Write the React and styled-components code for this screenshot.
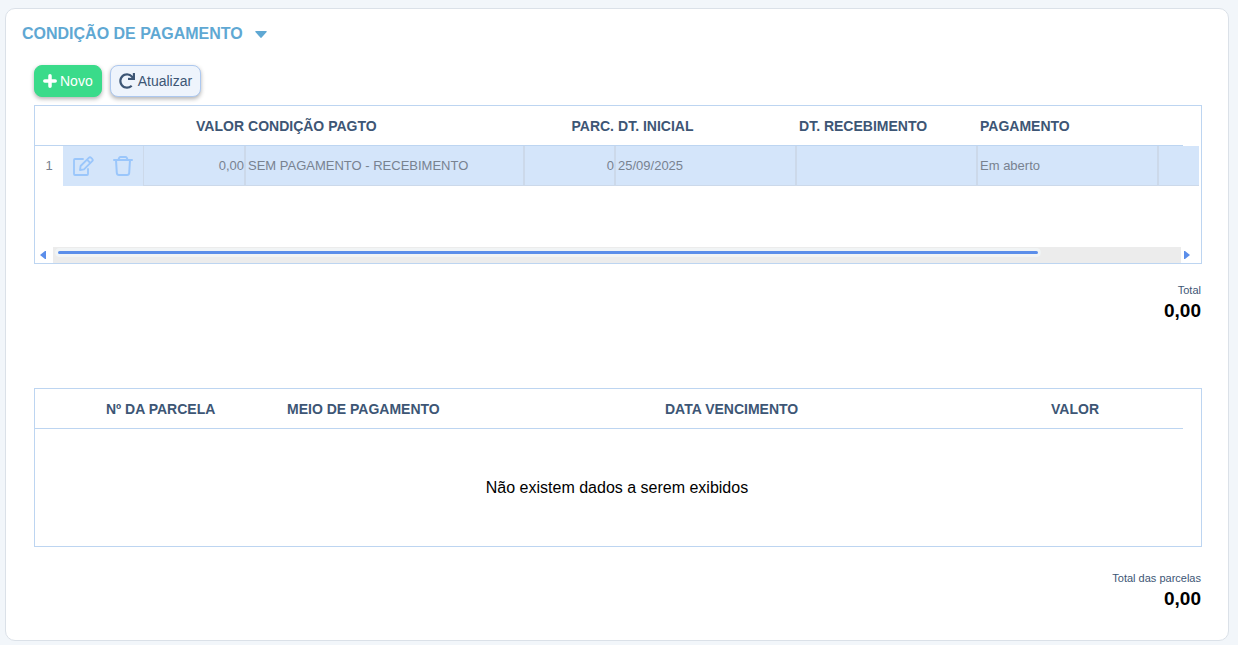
import React from "react";
import styled, { createGlobalStyle } from "styled-components";
import { FaRedo } from "react-icons/fa";

const Global = createGlobalStyle`
  * { box-sizing: border-box; }
  body {
    margin: 0;
    background: #f2f6fa;
    font-family: "Liberation Sans", Arial, sans-serif;
    color: #000;
  }
`;

const Page = styled.main`
  padding: 8px 9px 4px 5px;
`;

const Card = styled.section`
  background: #fff;
  border: 1px solid #dbe1e8;
  border-radius: 10px;
  padding: 15px 26px 28px 28px;
`;

const Title = styled.h2`
  margin: 0 0 0 -12px;
  font-size: 16px;
  line-height: 20px;
  font-weight: bold;
`;

const TitleToggle = styled.button`
  display: flex;
  align-items: center;
  gap: 12px;
  padding: 0;
  border: 0;
  background: none;
  font: inherit;
  color: #5fa8d3;
  cursor: pointer;
`;

const Toolbar = styled.div`
  display: flex;
  gap: 8px;
  margin: 21px 0 8px;
`;

const Button = styled.button`
  display: flex;
  align-items: center;
  gap: 3px;
  height: 32px;
  padding: 0 8px;
  border: 1px solid ${(p) => (p.$primary ? "#3adb8a" : "#adc8ef")};
  border-radius: 8px;
  background: ${(p) => (p.$primary ? "#3adb8a" : "#eef4fc")};
  color: ${(p) => (p.$primary ? "#fff" : "#3d5675")};
  font-family: inherit;
  font-size: 14px;
  box-shadow: 0 2px 4px rgba(0, 0, 0, 0.3);
  cursor: pointer;
`;

const Frame = styled.div`
  display: flex;
  flex-direction: column;
  min-height: 159px;
  border: 1px solid #bdd5f1;
  overflow: hidden;
`;

const Table = styled.table`
  width: calc(100% - 2px);
  table-layout: fixed;
  border-collapse: separate;
  border-spacing: 0;
`;

const Col = styled.col`
  width: ${(p) => (p.$w ? p.$w + "px" : "auto")};
`;

const HeadCell = styled.th`
  height: 40px;
  padding: 0 1px 0 3px;
  border-bottom: 1px solid #bdd5f1;
  font-size: 14px;
  font-weight: bold;
  color: #3d5675;
  white-space: nowrap;
  text-align: ${(p) => p.$align || "left"};
`;

const Gutter = styled.td`
  height: 40px;
  padding: 0;
`;

const Cell = styled.td`
  height: 40px;
  padding: 0 0 0 2px;
  border: solid #ccd9ea;
  border-width: 0 1px 1px;
  background: #d4e5fa;
  font-size: 13px;
  color: #788290;
  white-space: nowrap;
  text-align: ${(p) => p.$align || "left"};
`;

const EndCell = styled(Cell)`
  border-right: 0;
`;

const RowNumber = styled.th`
  padding: 0 0 1px;
  font-size: 13px;
  font-weight: normal;
  color: #788290;
`;

const ActionCell = styled.td`
  padding: 0;
  background: #d4e5fa;
`;

const IconButton = styled.button`
  display: flex;
  align-items: center;
  justify-content: center;
  width: 40px;
  height: 40px;
  padding: 0;
  border: 0;
  background: none;
  color: #9ac6fb;
  cursor: pointer;
`;

const EmptyCell = styled.td`
  height: 117px;
  padding: 0;
  font-size: 16px;
  text-align: center;
`;

const ScrollBar = styled.div`
  display: flex;
  height: 16px;
  margin-top: auto;
  padding-right: 2px;
`;

const ScrollArrow = styled.button`
  display: flex;
  align-items: center;
  width: 18px;
  padding: 0 0 0 ${(p) => (p.$next ? 3 : 5)}px;
  border: 0;
  background: none;
  color: #5b8eea;
`;

const Track = styled.div`
  flex: 1;
  padding: 1px 6px 1px 2px;
  background: #ececec;
`;

const Thumb = styled.div`
  width: 88%;
  height: 9px;
  border: 3px solid #f1f4f5;
  border-radius: 5px;
  background: #5b8eea;
`;

const Total = styled.div`
  display: flex;
  flex-direction: column;
  align-items: flex-end;
  margin: ${(p) => p.$top}px 1px 0;
`;

const TotalLabel = styled.span`
  font-size: 11px;
  line-height: 16px;
  color: #3d5675;
`;

const TotalValue = styled.strong`
  font-size: 19px;
  line-height: 26px;
`;

const Spacer = styled.div`
  height: 64px;
`;

const CaretIcon = () => (
  <svg width="12" height="7" viewBox="0 0 12 7" fill="currentColor" aria-hidden="true">
    <path d="M.8 0h10.400q.8.200.4.900L6.700 6.600q-.7.600-1.400 0L.4.900Q0 .2.800 0z" />
  </svg>
);

const PlusIcon = () => (
  <svg width="14" height="14" viewBox="0 0 14 14" stroke="currentColor" strokeWidth="3.500" strokeLinecap="round" aria-hidden="true">
    <path d="M7 1.800v10.400M1.800 7h10.400" />
  </svg>
);

const EditIcon = () => (
  <svg width="22" height="22" viewBox="0 0 22 22" fill="none" stroke="currentColor" strokeWidth="1.800" strokeLinejoin="round" strokeLinecap="round" aria-hidden="true">
    <path d="M11 4H3Q2 4 2 5v14q0 1 1 1h12q1 0 1-1v-5" />
    <path d="M8 15l.6-4 8.200-8.200a1.700 1.700 0 0 1 2.400 0l1 1a1.700 1.700 0 0 1 0 2.400L12 14.400 8 15zM15 4.700l3.300 3.300" />
  </svg>
);

const TrashIcon = () => (
  <svg width="22" height="22" viewBox="0 0 22 22" fill="none" stroke="currentColor" strokeWidth="2" strokeLinejoin="round" strokeLinecap="round" aria-hidden="true">
    <path d="M2 5h18M6.500 5Q7 2 8.500 2h5q1.500 0 2 3M4 5l.8 13q.2 2 2.200 2h8q2 0 2.200-2L18 5" />
  </svg>
);

const ArrowIcon = ({ next }) => (
  <svg width="6" height="8" viewBox="0 0 6 8" fill="currentColor" aria-hidden="true">
    <path d={next ? "M0 0h1l5 4-5 4H0z" : "M6 0H5L0 4l5 4h1z"} />
  </svg>
);

const paymentCols = [28, 40, 40, 102, 279, 91, 181, 181, 181, null, 16];
const parcelCols = [68, 181, 378, 181, 257, null, 16];

export default function App() {
  return (
    <>
      <Global />
      <Page>
        <Card>
          <Title>
            <TitleToggle type="button" aria-expanded="true">
              CONDIÇÃO DE PAGAMENTO
              <CaretIcon />
            </TitleToggle>
          </Title>
          <Toolbar>
            <Button type="button" $primary>
              <PlusIcon />
              Novo
            </Button>
            <Button type="button">
              <FaRedo size={16} />
              Atualizar
            </Button>
          </Toolbar>

          <Frame>
            <Table>
              <colgroup>{paymentCols.map((w, i) => <Col key={i} $w={w} />)}</colgroup>
              <thead>
                <tr>
                  <HeadCell colSpan={3} />
                  <HeadCell $align="right">VALOR</HeadCell>
                  <HeadCell>CONDIÇÃO PAGTO</HeadCell>
                  <HeadCell $align="right">PARC.</HeadCell>
                  <HeadCell>DT. INICIAL</HeadCell>
                  <HeadCell>DT. RECEBIMENTO</HeadCell>
                  <HeadCell>PAGAMENTO</HeadCell>
                  <HeadCell />
                  <Gutter />
                </tr>
              </thead>
              <tbody>
                <tr>
                  <RowNumber scope="row">1</RowNumber>
                  <ActionCell>
                    <IconButton type="button" aria-label="Editar"><EditIcon /></IconButton>
                  </ActionCell>
                  <ActionCell>
                    <IconButton type="button" aria-label="Excluir"><TrashIcon /></IconButton>
                  </ActionCell>
                  <Cell $align="right">0,00</Cell>
                  <Cell>SEM PAGAMENTO - RECEBIMENTO</Cell>
                  <Cell $align="right">0</Cell>
                  <Cell>25/09/2025</Cell>
                  <Cell />
                  <Cell>Em aberto</Cell>
                  <EndCell colSpan={2} />
                </tr>
              </tbody>
            </Table>
            <ScrollBar>
              <ScrollArrow type="button" aria-label="Rolar para a esquerda"><ArrowIcon /></ScrollArrow>
              <Track><Thumb /></Track>
              <ScrollArrow type="button" $next aria-label="Rolar para a direita"><ArrowIcon next /></ScrollArrow>
            </ScrollBar>
          </Frame>
          <Total $top={18}>
            <TotalLabel>Total</TotalLabel>
            <TotalValue>0,00</TotalValue>
          </Total>

          <Spacer />

          <Frame>
            <Table>
              <colgroup>{parcelCols.map((w, i) => <Col key={i} $w={w} />)}</colgroup>
              <thead>
                <tr>
                  <HeadCell />
                  <HeadCell>Nº DA PARCELA</HeadCell>
                  <HeadCell>MEIO DE PAGAMENTO</HeadCell>
                  <HeadCell>DATA VENCIMENTO</HeadCell>
                  <HeadCell $align="right">VALOR</HeadCell>
                  <HeadCell />
                  <Gutter />
                </tr>
              </thead>
              <tbody>
                <tr>
                  <EmptyCell colSpan={7}>Não existem dados a serem exibidos</EmptyCell>
                </tr>
              </tbody>
            </Table>
          </Frame>
          <Total $top={23}>
            <TotalLabel>Total das parcelas</TotalLabel>
            <TotalValue>0,00</TotalValue>
          </Total>
        </Card>
      </Page>
    </>
  );
}
